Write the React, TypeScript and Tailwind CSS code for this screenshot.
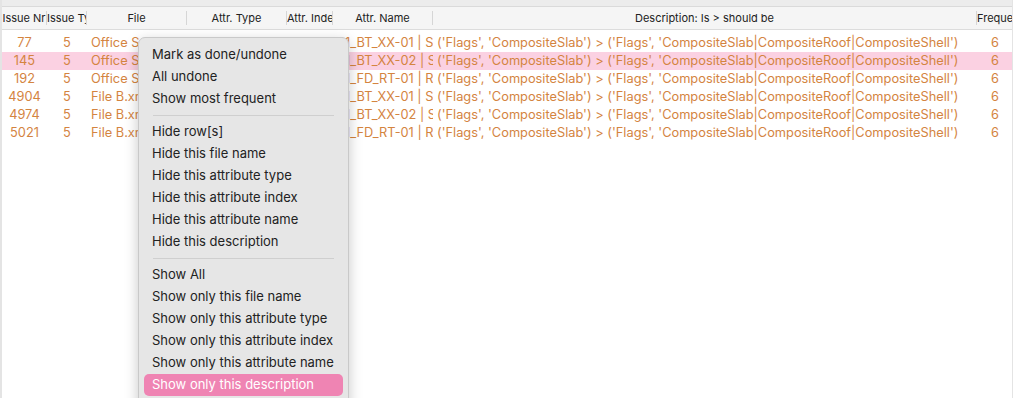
const rows = [
  { nr: "77", type: "5", file: "Office Space.xml", attrType: "IfcSlab", idx: "2", name: "01_BT_XX-01 | Slab", pink: false },
  { nr: "145", type: "5", file: "Office Space.xml", attrType: "IfcSlab", idx: "2", name: "01_BT_XX-02 | Slab", pink: true },
  { nr: "192", type: "5", file: "Office Space.xml", attrType: "IfcSlab", idx: "2", name: "01_FD_RT-01 | Roof", pink: false },
  { nr: "4904", type: "5", file: "File B.xml", attrType: "IfcSlab", idx: "2", name: "01_BT_XX-01 | Slab", pink: false },
  { nr: "4974", type: "5", file: "File B.xml", attrType: "IfcSlab", idx: "2", name: "01_BT_XX-02 | Slab", pink: false },
  { nr: "5021", type: "5", file: "File B.xml", attrType: "IfcSlab", idx: "2", name: "01_FD_RT-01 | Roof", pink: false },
];

const desc = "('Flags', 'CompositeSlab') > ('Flags', 'CompositeSlab|CompositeRoof|CompositeShell')";

const menuGroups = [
  ["Mark as done/undone", "All undone", "Show most frequent"],
  [
    "Hide row[s]",
    "Hide this file name",
    "Hide this attribute type",
    "Hide this attribute index",
    "Hide this attribute name",
    "Hide this description",
  ],
  [
    "Show All",
    "Show only this file name",
    "Show only this attribute type",
    "Show only this attribute index",
    "Show only this attribute name",
    "Show only this description",
  ],
];

function HeaderCell({ label, w, last }: { label: string; w: string; last?: boolean }) {
  return (
    <div className={`${w} shrink-0 h-full flex items-center overflow-hidden ${last ? "" : "border-r border-[#d6d6d6]"}`}>
      <div className="w-full text-center whitespace-nowrap overflow-hidden">{label}</div>
    </div>
  );
}

export default function App() {
  return (
    <div
      className="relative w-[1013px] h-[398px] overflow-hidden bg-white border-l-2 border-r border-[#e4e4e4] text-[#222]"
      style={{ fontFamily: 'Inter, "Liberation Sans", Arial, sans-serif' }}
    >
      <div className="h-[7px] bg-[#ececec] border-b border-[#dadada]" />

      <div className="h-[23px] flex items-center bg-[#f5f5f5] border-b border-[#dcdcdc] text-[11px] py-[4px]">
        <HeaderCell label="Issue Nr" w="w-[45px]" />
        <HeaderCell label="Issue Type" w="w-[40px]" />
        <HeaderCell label="File" w="w-[100px]" />
        <HeaderCell label="Attr. Type" w="w-[100px]" />
        <HeaderCell label="Attr. Index" w="w-[46px]" />
        <HeaderCell label="Attr. Name" w="w-[100px]" />
        <HeaderCell label="Description: Is > should be" w="w-[544px]" />
        <HeaderCell label="Frequency" w="w-[36px]" last />
      </div>

      <div className="pt-[4px] text-[12.8px] text-[#d4843f]">
        {rows.map((r) => (
          <div key={r.nr} className={`h-[18px] flex items-center whitespace-nowrap ${r.pink ? "bg-[#fbd1e2]" : ""}`}>
            <div className="w-[45px] shrink-0 text-center">{r.nr}</div>
            <div className="w-[40px] shrink-0 text-center">{r.type}</div>
            <div className="w-[100px] shrink-0 pl-[4px] overflow-hidden">{r.file}</div>
            <div className="w-[100px] shrink-0 pl-[4px] overflow-hidden">{r.attrType}</div>
            <div className="w-[46px] shrink-0 text-center overflow-hidden">{r.idx}</div>
            <div className="w-[100px] shrink-0 pl-[4px] overflow-hidden">{r.name}</div>
            <div className="w-[544px] shrink-0 pl-[4px] overflow-hidden">{desc}</div>
            <div className="w-[36px] shrink-0 text-center">6</div>
          </div>
        ))}
      </div>

      <div className="absolute left-[136px] top-[37px] w-[211px] h-[380px] rounded-[7px] bg-[#e6e6e6] border border-[#c9c9c9] shadow-[0_4px_14px_rgba(0,0,0,0.22)] pt-[6px] text-[13px] text-[#222]">
        {menuGroups.map((g, gi) => (
          <div key={gi}>
            {gi > 0 && <div className="mx-[14px] my-[5px] h-px bg-[#cfcfcf]" />}
            {g.map((item) => {
              const active = item === "Show only this description";
              return (
                <div key={item} className="px-[5px]">
                  <div
                    className={`h-[22px] flex items-center px-[8px] rounded-[5px] whitespace-nowrap ${
                      active ? "bg-[#ef84b3] text-white" : ""
                    }`}
                  >
                    {item}
                  </div>
                </div>
              );
            })}
          </div>
        ))}
      </div>
    </div>
  );
}
